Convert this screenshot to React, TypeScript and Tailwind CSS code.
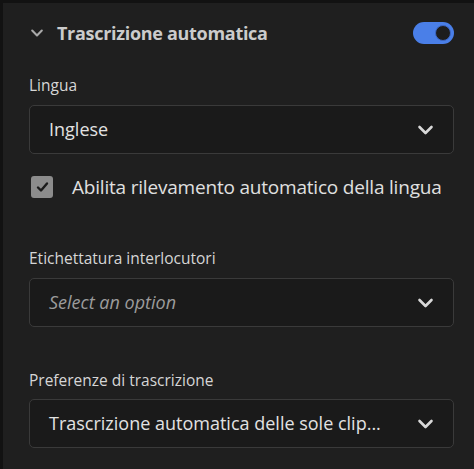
import React from 'react'

const Chevron = ({ className }: { className?: string }) => (
  <svg className={className} viewBox="0 0 16 10" fill="none" stroke="currentColor" strokeWidth={2.6} strokeLinecap="round" strokeLinejoin="round">
    <path d="M2 2l6 6 6-6" />
  </svg>
)

const Select = ({ value, placeholder }: { value?: string; placeholder?: string }) => (
  <div className="flex h-[49px] items-center justify-between rounded-[5px] border border-[#3a3a3a] bg-[#1a1a1a] pl-[19px] pr-[19px]">
    {value ? (
      <span className="whitespace-nowrap text-[18px] text-[#e2e2e2]">{value}</span>
    ) : (
      <span className="whitespace-nowrap text-[18px] italic text-[#9c9c9c]">{placeholder}</span>
    )}
    <Chevron className="ml-4 h-[10px] w-[17px] shrink-0 text-[#d8d8d8]" />
  </div>
)

export default function App() {
  return (
    <div className="h-[469px] w-[474px] bg-[#121212] pl-[3px] pt-[3px]" style={{ fontFamily: '"Open Sans", "Noto Sans", sans-serif' }}>
      <div className="h-full bg-[#1f1f1f] pl-[26px] pr-[20px]">
        <div className="flex h-[60px] items-center justify-between">
          <div className="flex items-center">
            <Chevron className="ml-[1px] h-[8px] w-[14px] text-[#a9a9a9]" />
            <span className="ml-[13px] text-[18px] font-bold tracking-[-0.3px] text-[#cbcbcb]">Trascrizione automatica</span>
          </div>
          <div className="flex h-[22px] w-[41px] items-center justify-end rounded-full bg-[#4a7fe8] pr-[3px]">
            <div className="h-[16px] w-[16px] rounded-full border border-[#3c66c4] bg-[#1d1d1d]" />
          </div>
        </div>

        <div className="mt-[12px] text-[15.5px] leading-[20px] text-[#d6d6d6]">Lingua</div>
        <div className="mt-[10px]">
          <Select value="Inglese" />
        </div>

        <div className="mt-[21px] flex h-[24px] items-center">
          <div className="ml-[2px] flex h-[22px] w-[22px] items-center justify-center rounded-[3px] bg-[#8c8c8c]">
            <svg className="h-[12px] w-[13px]" viewBox="0 0 13 12" fill="none" stroke="#1b1b1b" strokeWidth={2.4} strokeLinecap="round" strokeLinejoin="round">
              <path d="M2 6.5l3 3L11 2.5" />
            </svg>
          </div>
          <span className="ml-[19px] whitespace-nowrap text-[19px] tracking-[-0.2px] text-[#e0e0e0]">Abilita rilevamento automatico della lingua</span>
        </div>

        <div className="mt-[49px] text-[15.5px] leading-[20px] text-[#d6d6d6]">Etichettatura interlocutori</div>
        <div className="mt-[10px]">
          <Select placeholder="Select an option" />
        </div>

        <div className="mt-[43px] text-[15.5px] leading-[20px] text-[#d6d6d6]">Preferenze di trascrizione</div>
        <div className="mt-[9px]">
          <Select value="Trascrizione automatica delle sole clip..." />
        </div>
      </div>
    </div>
  )
}
